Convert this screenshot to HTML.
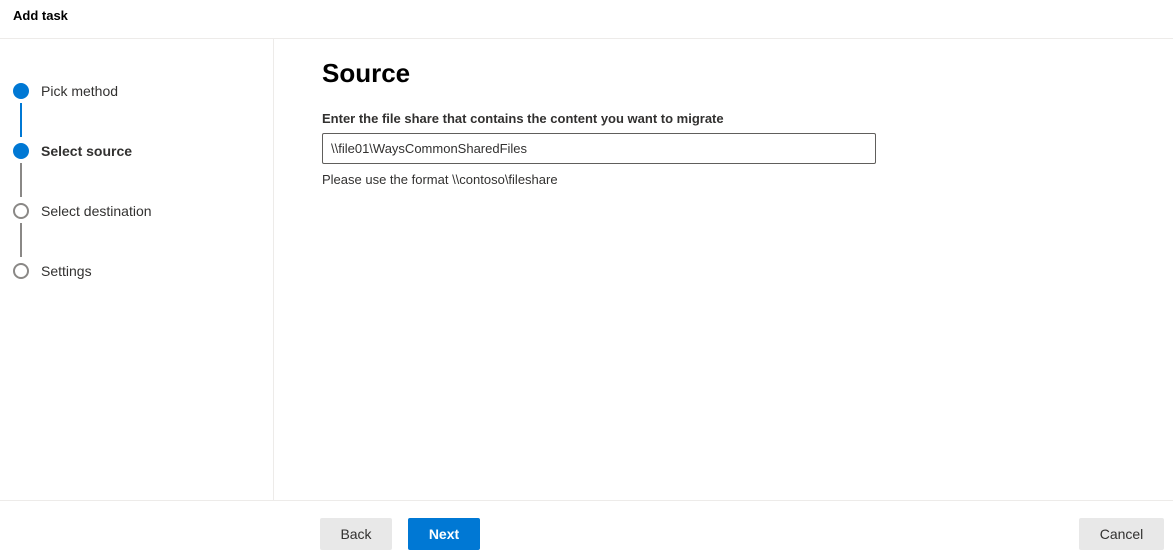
<!DOCTYPE html>
<html><head><meta charset="utf-8"><style>
*{box-sizing:border-box;margin:0;padding:0}
body{width:1173px;height:558px;background:#fff;font-family:"Liberation Sans",sans-serif;color:#323130;position:relative;overflow:hidden}
.a{position:absolute}
.dot{position:absolute;left:13px;width:16px;height:16px;border-radius:50%}
.f{background:#0078d4}
.o{border:2px solid #8a8886;background:#fff}
.ln{position:absolute;left:20px;width:2px;height:34px}
.lbl{position:absolute;left:41px;font-size:14px;color:#323130}
.btn{position:absolute;top:518px;height:32px;font-size:14px;display:flex;align-items:center;justify-content:center;border-radius:2px}
</style></head><body>
<div class="a" style="left:13px;top:8px;font-size:13px;font-weight:bold;color:#000">Add task</div>
<div class="a" style="left:0;top:38px;width:1173px;height:1px;background:#edebe9"></div>
<div class="a" style="left:273px;top:39px;width:1px;height:461px;background:#edebe9"></div>
<div class="a" style="left:0;top:500px;width:1173px;height:1px;background:#edebe9"></div>

<div class="dot f" style="top:83px"></div>
<div class="ln" style="top:103px;background:#0078d4"></div>
<div class="dot f" style="top:143px"></div>
<div class="ln" style="top:163px;background:#8a8886"></div>
<div class="dot o" style="top:203px"></div>
<div class="ln" style="top:223px;background:#8a8886"></div>
<div class="dot o" style="top:263px"></div>
<div class="lbl" style="top:83px">Pick method</div>
<div class="lbl" style="top:143px;font-weight:bold">Select source</div>
<div class="lbl" style="top:203px">Select destination</div>
<div class="lbl" style="top:263px">Settings</div>

<div class="a" style="left:322px;top:58px;font-size:26px;font-weight:bold;color:#000">Source</div>
<div class="a" style="left:322px;top:111px;font-size:13px;font-weight:bold;color:#323130">Enter the file share that contains the content you want to migrate</div>
<div class="a" style="left:322px;top:133px;width:554px;height:31px;border:1px solid #605e5c;border-radius:2px;font-size:13px;padding:7px 0 0 8px;color:#323130">\\file01\WaysCommonSharedFiles</div>
<div class="a" style="left:322px;top:172px;font-size:13px;color:#323130">Please use the format \\contoso\fileshare</div>

<div class="btn" style="left:320px;width:72px;background:#e8e8e8;color:#323130">Back</div>
<div class="btn" style="left:408px;width:72px;background:#0078d4;color:#fff;font-weight:bold">Next</div>
<div class="btn" style="left:1079px;width:85px;background:#e8e8e8;color:#323130">Cancel</div>
</body></html>
